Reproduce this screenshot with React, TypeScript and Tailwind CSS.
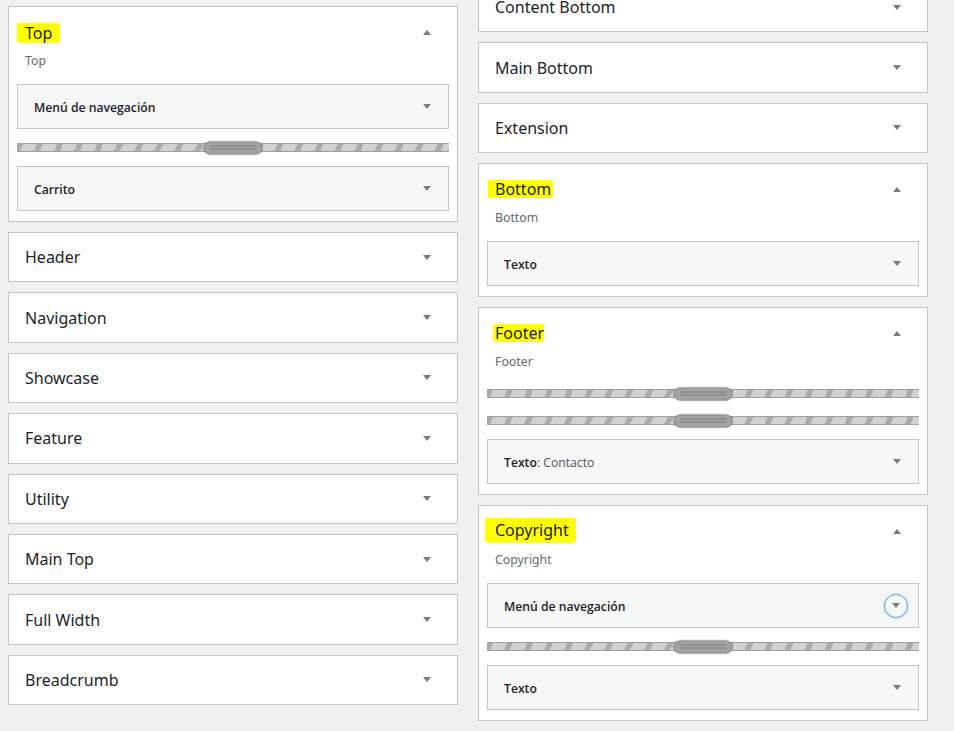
import React from "react";

const Arrow = ({ up = false }: { up?: boolean }) => (
  <svg width="8" height="5" viewBox="0 0 8 5" className="shrink-0">
    <polygon points={up ? "0,5 4,0 8,5" : "0,0 8,0 4,5"} fill="#787c82" />
  </svg>
);

const Collapsed = ({ title }: { title: string }) => (
  <div className="h-[50.4px] shrink-0 bg-white border border-[#c3c4c7] flex items-center justify-between pl-[16px] pr-[26px]">
    <span className="text-[16px] leading-[20px] text-[#1d2327]">{title}</span>
    <Arrow />
  </div>
);

type Item =
  | { kind: "widget"; title: string; sub?: string; focus?: boolean }
  | { kind: "bar" };

const Widget = ({ title, sub, focus }: { title: string; sub?: string; focus?: boolean }) => (
  <div
    className={
      focus
        ? "h-[45px] mb-[10px] bg-[#f6f7f7] border border-[#c3c4c7] flex items-center justify-between pl-[16px] pr-[10px]"
        : "h-[45px] mb-[10px] bg-[#f6f7f7] border border-[#c3c4c7] flex items-center justify-between pl-[16px] pr-[17px]"
    }
  >
    <span className="pt-[3px] text-[12.2px] font-semibold font-['Open_Sans','Noto_Sans',sans-serif] text-[#1d2327]">
      {title}
      {sub ? <span className="font-normal text-[#50575e]">: {sub}</span> : null}
    </span>
    {focus ? (
      <span className="w-[24px] h-[24px] rounded-full border-[1.5px] border-[#5b9dd9] shadow-[0_0_2px_rgba(79,148,212,0.6)] flex items-center justify-center">
        <Arrow />
      </span>
    ) : (
      <Arrow />
    )}
  </div>
);

const Bar = () => (
  <div className="pt-[4px] pb-[14px]">
    <div className="relative h-[9px] border-y border-[#a0a0a0] bg-[repeating-linear-gradient(114deg,#ababab_0px,#ababab_5.5px,#d2d2d2_5.5px,#d2d2d2_18.3px)]">
      <div className="absolute left-1/2 top-1/2 -translate-x-1/2 -translate-y-1/2 w-[59px] h-[13px] rounded-full bg-[#a3a3a3] border border-[#8e8e8e] shadow-[0_0_2px_rgba(0,0,0,0.35)] flex flex-col items-center justify-center gap-[2px]">
        <div className="w-[46px] h-px bg-[#7e7e7e]" />
        <div className="w-[46px] h-px bg-[#7e7e7e]" />
      </div>
    </div>
  </div>
);

const Expanded = ({
  title,
  hl,
  items,
}: {
  title: string;
  hl: string;
  items: Item[];
}) => (
  <div className="shrink-0 bg-white border border-[#c3c4c7]">
    <div className="mt-[13px] h-[24px] flex items-center justify-between pl-[16px] pr-[26px]">
      <span className={hl}>{title}</span>
      <Arrow up />
    </div>
    <div className="mt-[6px] pt-[1px] h-[20px] leading-[20px] pl-[16px] text-[12.3px] text-[#646970]">{title}</div>
    <div className="mt-[14px] px-[8px] flex flex-col">
      {items.map((it, i) =>
        it.kind === "bar" ? (
          <Bar key={i} />
        ) : (
          <Widget key={i} title={it.title} sub={it.sub} focus={it.focus} />
        )
      )}
    </div>
  </div>
);

export default function App() {
  return (
    <div className="w-[954px] h-[731px] overflow-hidden bg-[#f0f0f1] flex gap-[20px] pl-[8px] pt-[6px] font-['Noto_Sans','Open_Sans',sans-serif]">
      <div className="w-[450px] flex flex-col gap-[10px]">
        <Expanded
          title="Top"
          hl="-ml-[8px] pl-[8px] pr-[8px] mt-[2px] h-[20px] leading-[20px] bg-[#ffff00] rounded-[2px] text-[16px] text-[#1d2327]"
          items={[
            { kind: "widget", title: "Menú de navegación" },
            { kind: "bar" },
            { kind: "widget", title: "Carrito" },
          ]}
        />
        <Collapsed title="Header" />
        <Collapsed title="Navigation" />
        <Collapsed title="Showcase" />
        <Collapsed title="Feature" />
        <Collapsed title="Utility" />
        <Collapsed title="Main Top" />
        <Collapsed title="Full Width" />
        <Collapsed title="Breadcrumb" />
      </div>
      <div className="w-[450px] -mt-[24px] flex flex-col gap-[10px]">
        <Collapsed title="Content Bottom" />
        <Collapsed title="Main Bottom" />
        <Collapsed title="Extension" />
        <Expanded
          title="Bottom"
          hl="-ml-[7px] pl-[7px] pr-[2px] h-[18px] leading-[18px] bg-[#ffff00] rounded-[2px] text-[16px] text-[#1d2327]"
          items={[{ kind: "widget", title: "Texto" }]}
        />
        <Expanded
          title="Footer"
          hl="-ml-[2px] pl-[2px] pr-[0px] h-[18px] leading-[18px] bg-[#ffff00] rounded-[2px] text-[16px] text-[#1d2327]"
          items={[
            { kind: "bar" },
            { kind: "bar" },
            { kind: "widget", title: "Texto", sub: "Contacto" },
          ]}
        />
        <Expanded
          title="Copyright"
          hl="-ml-[10px] pl-[10px] pr-[7px] -mt-[2px] h-[25px] leading-[25px] bg-[#ffff00] rounded-[3px] text-[16px] text-[#1d2327]"
          items={[
            { kind: "widget", title: "Menú de navegación", focus: true },
            { kind: "bar" },
            { kind: "widget", title: "Texto" },
          ]}
        />
      </div>
    </div>
  );
}
